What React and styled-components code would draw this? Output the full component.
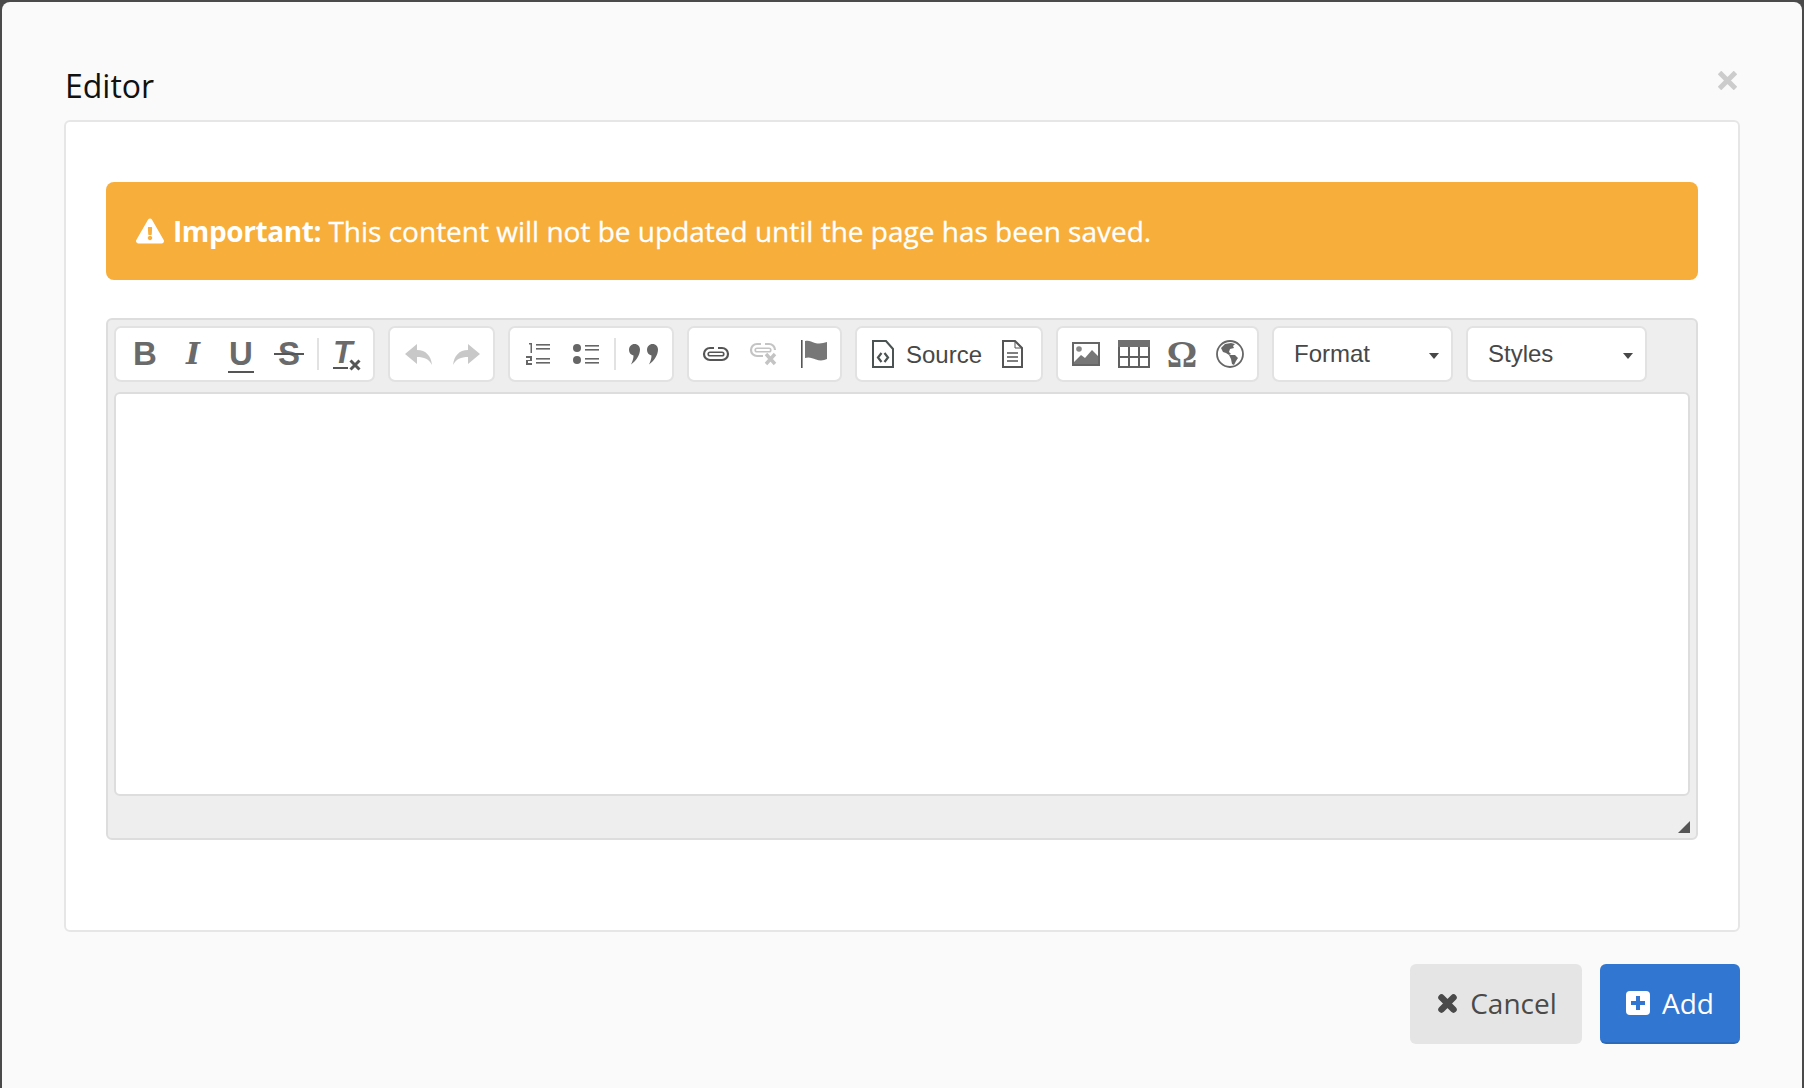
import React from 'react';
import styled, { createGlobalStyle } from 'styled-components';
import { FaExclamationTriangle } from 'react-icons/fa';

const GlobalStyle = createGlobalStyle`
    html, body { margin: 0; padding: 0; background: #4a4a4a; }
    * { box-sizing: border-box; }
`;

const Backdrop = styled.div`
    width: 1804px;
    height: 1088px;
    overflow: hidden;
    padding: 2px 2px 0;
    background: #4a4a4a;
    font-family: "Open Sans", sans-serif;
`;

const Modal = styled.div`
    height: 1100px;
    padding: 0 62px;
    background: #fafafa;
    border-radius: 8px 8px 0 0;
`;

const Header = styled.div`
    height: 118px;
    display: flex;
    justify-content: space-between;
`;

const Title = styled.h2`
    margin: 64px 0 0 1px;
    font-size: 32px;
    line-height: 40px;
    font-weight: 400;
    color: #111;
`;

const Close = styled.svg`
    margin: 69px 3px 0 0;
`;

const Panel = styled.div`
    height: 812px;
    padding: 60px 40px 0;
    background: #fff;
    border: 2px solid #e6e6e6;
    border-radius: 6px;
`;

const Alert = styled.div`
    height: 98px;
    padding: 0 30px;
    display: flex;
    align-items: center;
    gap: 9px;
    background: #f7ae3a;
    border-radius: 8px;
    color: #fff;
    font-size: 28px;
    svg { width: 28px; height: 28px; flex: none; }
`;

const AlertText = styled.span`
    -webkit-text-stroke: 0.3px #fff;
    strong { font-weight: 700; letter-spacing: -0.4px; -webkit-text-stroke: 0; }
`;

const Cke = styled.div`
    height: 522px;
    margin-top: 38px;
    padding: 6px 6px 0 6px;
    background: #eee;
    border: 2px solid #ddd;
    border-radius: 6px;
    position: relative;
`;

const Toolbar = styled.div`
    display: flex;
    gap: 13px;
`;

const Group = styled.div`
    height: 56px;
    width: ${p => p.$w}px;
    padding: 0 ${p => p.$pad}px;
    display: flex;
    align-items: center;
    background: #fff;
    border: 2px solid #e2e2e2;
    border-radius: 7px;
`;

const Btn = styled.span`
    width: ${p => p.$w || 48}px;
    height: 40px;
    flex: none;
    display: flex;
    align-items: center;
    justify-content: center;
    svg { display: block; }
`;

const Glyph = styled.span`
    font-family: "Liberation Sans", sans-serif;
    font-weight: 700;
    font-size: 33px;
    line-height: 40px;
    color: #6a6a6a;
`;

const ItalicGlyph = styled(Glyph)`
    font-family: "DejaVu Serif", serif;
    font-style: italic;
    font-size: 30px;
`;

const UnderGlyph = styled(Glyph)`
    position: relative;
    &::after {
        content: "";
        position: absolute;
        left: -1px;
        right: -1px;
        bottom: 1px;
        height: 2px;
        background: #555;
    }
`;

const StrikeGlyph = styled(Glyph)`
    position: relative;
    &::after {
        content: "";
        position: absolute;
        left: -4px;
        right: -4px;
        top: 19px;
        height: 2px;
        background: #555;
    }
`;

const OmegaGlyph = styled(Glyph)`
    font-family: "Liberation Serif", serif;
    font-size: 38px;
`;

const ClearIcon = styled.span`
    position: relative;
    display: block;
    width: 28px;
    height: 34px;
`;

const ClearX = styled.svg`
    position: absolute;
    right: -2px;
    bottom: 0;
`;

const ClearT = styled.span`
    display: block;
    font-family: "Liberation Sans", sans-serif;
    font-weight: 700;
    font-style: italic;
    font-size: 32px;
    line-height: 30px;
    color: #6a6a6a;
    margin-left: 2px;
    border-bottom: 2px solid #555;
    width: 15px;
    overflow: visible;
    white-space: nowrap;
`;

const Sep = styled.span`
    width: 2px;
    height: 32px;
    margin-left: 4px;
    flex: none;
    background: #e2e2e2;
`;

const Label = styled.span`
    font-family: "Liberation Sans", sans-serif;
    font-size: 24px;
    color: #474747;
`;

const SourceLabel = styled(Label)`
    margin: 2px 20px 0 12px;
`;

const Combo = styled(Group)`
    padding: 0 12px 0 20px;
    justify-content: space-between;
`;

const Caret = styled.span`
    width: 0;
    height: 0;
    margin-top: 3px;
    border-left: 5px solid transparent;
    border-right: 5px solid transparent;
    border-top: 6px solid #474747;
`;

const Editing = styled.div`
    height: 404px;
    margin-top: 10px;
    background: #fff;
    border: 2px solid #ddd;
    border-radius: 6px;
`;

const Resizer = styled.svg`
    position: absolute;
    right: 6px;
    bottom: 5px;
`;

const Footer = styled.div`
    margin-top: 32px;
    display: flex;
    justify-content: flex-end;
    gap: 18px;
`;

const Button = styled.button`
    height: 80px;
    width: ${p => p.$w}px;
    display: flex;
    align-items: center;
    justify-content: center;
    gap: ${p => (p.$primary ? 12 : 13)}px;
    padding: 0 0 0 ${p => (p.$primary ? 0 : 3)}px;
    font-family: "Open Sans", sans-serif;
    font-size: 28px;
    border: 0;
    border-radius: 6px;
    background: ${p => (p.$primary ? '#3176d1' : '#e5e5e5')};
    border-bottom: 2px solid ${p => (p.$primary ? '#2b69bb' : '#e5e5e5')};
    color: ${p => (p.$primary ? '#fff' : '#4a4a4a')};
`;

const G = '#666';

const CloseX = () => (
    <Close width="19" height="19" viewBox="0 0 19 19" stroke="#ccc" strokeWidth="5">
        <path d="M1.500 1.500l16 16M17.500 1.500l-16 16" />
    </Close>
);

const Undo = () => (
    <svg width="27" height="21" viewBox="0 0 27 21" fill="#c8c8c8">
        <path d="M0 10L12 0v6c9 0 14 6 15 15-3-6-8-8-15-8v7z" />
    </svg>
);

const Redo = () => (
    <svg width="27" height="21" viewBox="0 0 27 21" fill="#c8c8c8">
        <path d="M27 10L15 0v6C6 6 1 12 0 21c3-6 8-8 15-8v7z" />
    </svg>
);

const NumList = () => (
    <svg width="25" height="24" viewBox="0 0 25 24" fill={G}>
        <path d="M3 1h3v10H4.500V2.500H3z" />
        <path d="M0 14h6v5H2v2h4v2H0v-5h4v-2H0z" />
        <rect x="10" y="2" width="14" height="1.600" />
        <rect x="10" y="6" width="14" height="1.600" />
        <rect x="10" y="16" width="14" height="1.600" />
        <rect x="10" y="20" width="14" height="1.600" />
    </svg>
);

const BulList = () => (
    <svg width="26" height="22" viewBox="0 0 26 22" fill={G}>
        <circle cx="4" cy="5" r="4" />
        <circle cx="4" cy="17" r="4" />
        <rect x="12" y="2" width="14" height="1.600" />
        <rect x="12" y="6" width="14" height="1.600" />
        <rect x="12" y="15" width="14" height="1.600" />
        <rect x="12" y="19" width="14" height="1.600" />
    </svg>
);

const Quote = () => (
    <svg width="30" height="21" viewBox="0 0 30 21" fill={G}>
        <path d="M5.500 0C9 0 11 2.500 11 5.500 11 11 7 17 2 20.500c1.500-3 2.500-6 2.500-9C2 11 0 9 0 6c0-3.500 2.500-6 5.500-6z" />
        <path d="M23.500 0C27 0 29 2.500 29 5.500 29 11 25 17 20 20.500c1.500-3 2.500-6 2.500-9C20 11 18 9 18 6c0-3.500 2.500-6 5.500-6z" />
    </svg>
);

const LinkIcon = () => (
    <svg width="28" height="16" viewBox="0 0 28 16" fill="none" stroke="#555" strokeWidth="2.200">
        <path d="M12 2H8a6 6 0 0 0 0 12h12a6 6 0 0 0 0-12h-4" />
        <path d="M8 6.200h12a1.800 1.800 0 0 1 0 3.600H8a1.800 1.800 0 0 1 0-3.600z" strokeWidth="1.600" />
    </svg>
);

const UnlinkIcon = () => (
    <svg width="30" height="24" viewBox="0 0 30 24" fill="none" stroke="#c4c4c4" strokeWidth="2.200">
        <path d="M12 2H8a6 6 0 0 0 0 12h6M16 2h4a6 6 0 0 1 6 6" />
        <path d="M8 6.200h12a1.800 1.800 0 0 1 0 3.600H8a1.800 1.800 0 0 1 0-3.600z" strokeWidth="1.600" />
        <path d="M17 12l9 10M26 12l-9 10" strokeWidth="3.400" />
    </svg>
);

const FlagIcon = () => (
    <svg width="26" height="28" viewBox="0 0 26 28">
        <rect x="0" y="0" width="1.600" height="28" fill="#555" />
        <path d="M4 1c4-1 6 .5 10 2 4 1 8 .5 12-1v17c-3 1.500-7 2-11 .5-4-1.500-7-3-11-1.500z" fill="#777" />
    </svg>
);

const SourceIcon = () => (
    <svg width="22" height="28" viewBox="0 0 22 28" fill="none" stroke="#4a5252" strokeWidth="2">
        <path d="M1 1h13l7 8v18H1z" />
        <path d="M9.500 13l-3.500 4.500 3.500 4.500M12.500 13l3.500 4.500-3.500 4.500" strokeWidth="2.200" />
    </svg>
);

const TemplateIcon = () => (
    <svg width="21" height="28" viewBox="0 0 21 28" fill="none" stroke="#555" strokeWidth="2">
        <path d="M1 1h12l7 7v19H1z" />
        <path d="M13 1v7h7" strokeWidth="1" />
        <path d="M5 13h11M5 17h11M5 21h11" strokeWidth="1.600" />
    </svg>
);

const ImageIcon = () => (
    <svg width="28" height="24" viewBox="0 0 28 24">
        <rect x="1" y="1" width="26" height="22" fill="#fff" stroke="#666" strokeWidth="2" />
        <circle cx="7" cy="7" r="2.800" fill="#888" />
        <path d="M2 20l7-7 4 3 7-8 6 6v8H2z" fill="#777" />
    </svg>
);

const TableIcon = () => (
    <svg width="32" height="28" viewBox="0 0 32 28">
        <rect x="0" y="0" width="32" height="7" fill="#707070" />
        <path d="M1 7v20h30V7M11 7v20M21 7v20M1 17h30" fill="none" stroke="#606060" strokeWidth="2" />
    </svg>
);

const GlobeIcon = () => (
    <svg width="28" height="28" viewBox="0 0 28 28">
        <circle cx="14" cy="14" r="13" fill="#fff" stroke="#666" strokeWidth="1.800" />
        <path d="M5 8l4-4 6-1 4 1-2 2 1 2-4 1-1 3 2 2-2 1-3-2-3-1z" fill="#666" />
        <path d="M13 15l6 0 3 3-2 3-2 4-2-1-1-5z" fill="#666" />
    </svg>
);

const ClearXIcon = () => (
    <ClearX width="12" height="12" viewBox="0 0 12 12" stroke="#555" strokeWidth="3">
        <path d="M1.500 1.500l9 9M10.500 1.500l-9 9" />
    </ClearX>
);

const CancelIcon = () => (
    <svg width="19" height="19" viewBox="0 0 19 19" stroke="#4a4a4a" strokeWidth="6.500" strokeLinecap="round">
        <path d="M3.500 3.500l12 12M15.500 3.500l-12 12" />
    </svg>
);

const AddIcon = () => (
    <svg width="24" height="24" viewBox="0 0 24 24">
        <rect width="24" height="24" rx="4" fill="#fff" />
        <path d="M12 5v14M5 12h14" stroke="#3176d1" strokeWidth="4" />
    </svg>
);

const App = () => (
    <>
        <GlobalStyle />
        <Backdrop>
            <Modal>
                <Header>
                    <Title>Editor</Title>
                    <CloseX />
                </Header>
                <Panel>
                    <Alert>
                        <FaExclamationTriangle />
                        <AlertText><strong>Important:</strong> This content will not be updated until the page has been saved.</AlertText>
                    </Alert>
                    <Cke>
                        <Toolbar>
                            <Group $w={261} $pad={5}>
                                <Btn><Glyph>B</Glyph></Btn>
                                <Btn><ItalicGlyph>I</ItalicGlyph></Btn>
                                <Btn><UnderGlyph>U</UnderGlyph></Btn>
                                <Btn><StrikeGlyph>S</StrikeGlyph></Btn>
                                <Sep />
                                <Btn $w={52}><ClearIcon><ClearT>T</ClearT><ClearXIcon /></ClearIcon></Btn>
                            </Group>
                            <Group $w={107} $pad={4}>
                                <Btn><Undo /></Btn>
                                <Btn><Redo /></Btn>
                            </Group>
                            <Group $w={166} $pad={4}>
                                <Btn><NumList /></Btn>
                                <Btn><BulList /></Btn>
                                <Sep />
                                <Btn $w={56}><Quote /></Btn>
                            </Group>
                            <Group $w={155} $pad={3}>
                                <Btn><LinkIcon /></Btn>
                                <Btn><UnlinkIcon /></Btn>
                                <Btn $w={52}><FlagIcon /></Btn>
                            </Group>
                            <Group $w={188} $pad={15}>
                                <SourceIcon />
                                <SourceLabel>Source</SourceLabel>
                                <TemplateIcon />
                            </Group>
                            <Group $w={203} $pad={4}>
                                <Btn><ImageIcon /></Btn>
                                <Btn><TableIcon /></Btn>
                                <Btn><OmegaGlyph>Ω</OmegaGlyph></Btn>
                                <Btn><GlobeIcon /></Btn>
                            </Group>
                            <Combo $w={181}><Label>Format</Label><Caret /></Combo>
                            <Combo $w={181}><Label>Styles</Label><Caret /></Combo>
                        </Toolbar>
                        <Editing />
                        <Resizer width="12" height="12" viewBox="0 0 12 12"><path d="M12 0v12H0z" fill="#555" /></Resizer>
                    </Cke>
                </Panel>
                <Footer>
                    <Button $w={172}><CancelIcon />Cancel</Button>
                    <Button $w={140} $primary><AddIcon />Add</Button>
                </Footer>
            </Modal>
        </Backdrop>
    </>
);

export default App;
